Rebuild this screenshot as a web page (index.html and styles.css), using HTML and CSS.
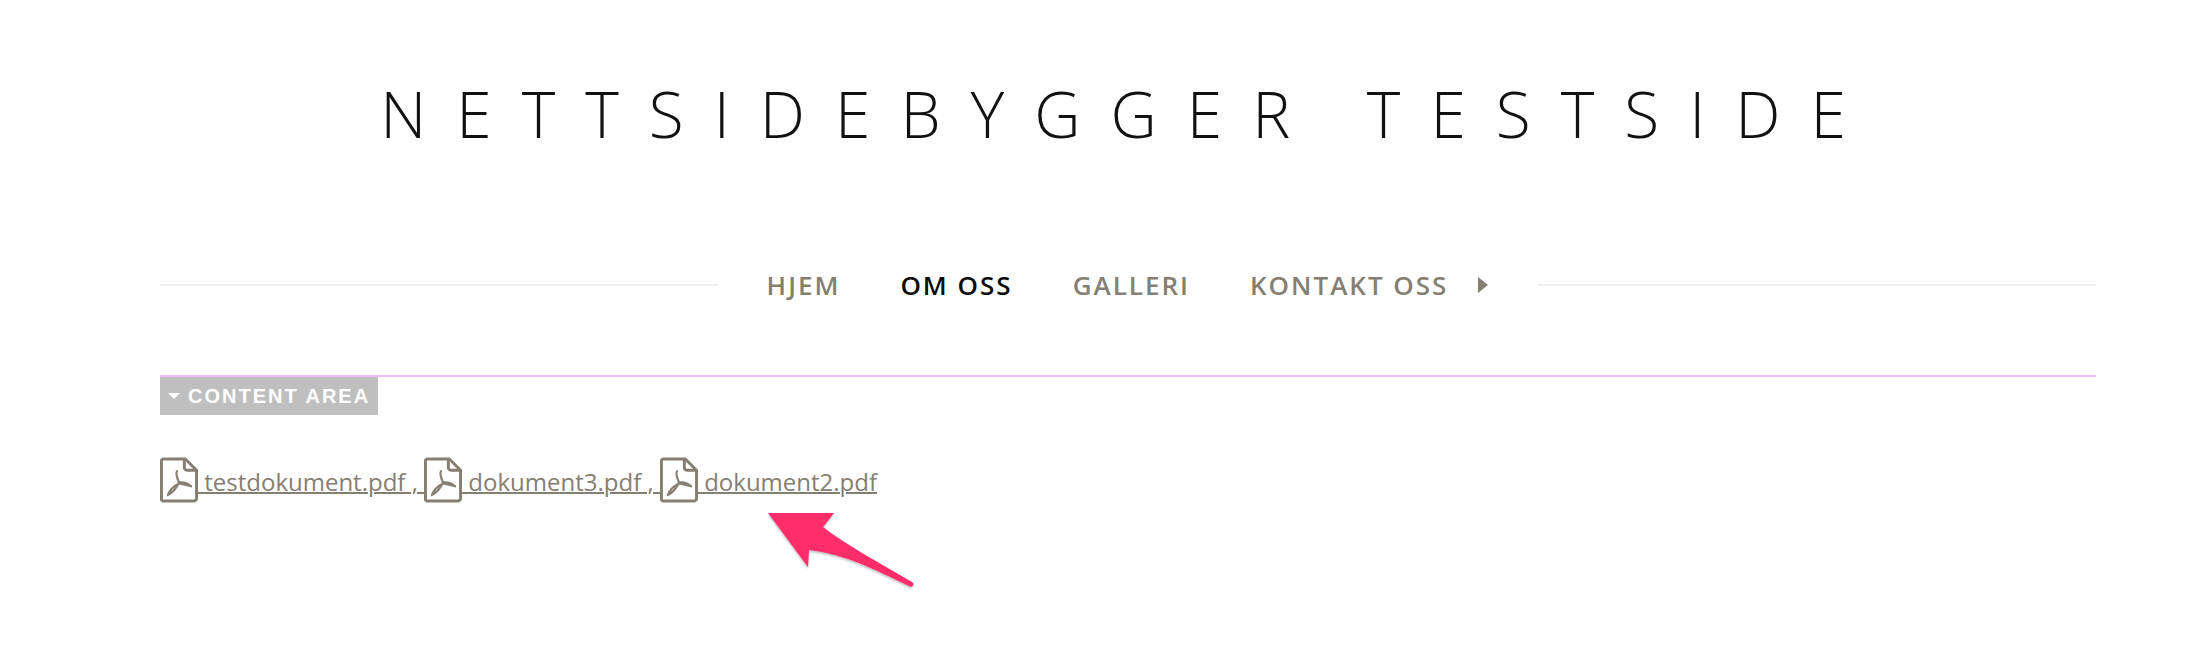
FILE: index.html
```html
<!DOCTYPE html>
<html lang="no">
<head>
<meta charset="utf-8">
<title>Nettsidebygger testside</title>
<link rel="stylesheet" href="styles.css">
</head>
<body>
<svg class="defs" width="0" height="0" aria-hidden="true">
  <symbol id="pdf" viewBox="0 0 39 46">
    <path d="M3.500 1.500H26L37.500 13V42a2.500 2.500 0 0 1-2.500 2.500H3.500a2 2 0 0 1-2-2.500V3.500a2 2 0 0 1 2-2Z" fill="none" stroke="#857e72" stroke-width="3" stroke-linejoin="round"/>
    <path d="M25 2V10.500a2.500 2.500 0 0 0 2.500 2.500H37" fill="none" stroke="#857e72" stroke-width="3"/>
    <path d="M17.500 14C16 16 17.500 21 19.500 25.500C17 31 12.500 36 8 38.500C10 33 14.500 29 19.500 26.500C23 27 27.500 28 32 29.500C27.500 25.500 23 25 19.500 25.500" fill="none" stroke="#857e72" stroke-width="2.200" stroke-linecap="round" stroke-linejoin="round"/>
  </symbol>
</svg>
<div class="page">
  <header class="site-title">NETTSIDEBYGGER TESTSIDE</header>
  <nav class="nav">
    <span class="nav-line"></span>
    <ul class="nav-list">
      <li class="nav-item">HJEM</li>
      <li class="nav-item nav-active">OM OSS</li>
      <li class="nav-item">GALLERI</li>
      <li class="nav-item nav-more">KONTAKT OSS<span class="nav-caret"></span></li>
    </ul>
    <span class="nav-line"></span>
  </nav>
  <section class="content">
    <div class="tag"><span class="tag-caret"></span>CONTENT AREA</div>
    <div class="files">
      <a class="file" href="#"><svg class="pdf-icon"><use href="#pdf"/></svg> testdokument.pdf , </a><a class="file" href="#"><svg class="pdf-icon"><use href="#pdf"/></svg> dokument3.pdf , </a><a class="file" href="#"><svg class="pdf-icon"><use href="#pdf"/></svg> dokument2.pdf</a>
      <svg class="arrow" viewBox="0 0 148 78" width="148" height="78" aria-hidden="true">
        <defs><filter id="sh" x="-10%" y="-10%" width="120%" height="130%"><feDropShadow dx="0" dy="1.500" stdDeviation="1" flood-color="#000" flood-opacity=".3"/></filter></defs>
        <path d="M0 0H66L55 14C78 32 112 50 144 69C147 71 145 75 141 73C105 56 80 42 41 37L40 54Z" fill="#ff2d6b" filter="url(#sh)"/>
      </svg>
    </div>
  </section>
</div>
</body>
</html>
```
FILE: styles.css
```css
html, body { margin: 0; padding: 0; background: #fff; }
body { height: 652px; overflow: hidden; font-family: "Open Sans", sans-serif; }
.defs { position: absolute; }
.page { padding: 0 90px 0 160px; }
.site-title {
  height: 232px;
  padding-top: 70px;
  box-sizing: border-box;
  text-align: center;
  font-weight: 300;
  font-size: 64px;
  line-height: 87px;
  letter-spacing: 30px;
  color: #111;
  white-space: nowrap;
}
.nav { display: flex; align-items: center; height: 106px; margin-bottom: 37px; }
.nav-line { flex: 1; height: 2px; background: #f0eeee; }
.nav-list { display: flex; gap: 60px; list-style: none; margin: 0; padding: 0 50px 0 49px; }
.nav-item { font-size: 26px; font-weight: 600; letter-spacing: 2px; line-height: 32px; color: #857e72; white-space: nowrap; }
.nav-active { color: #0b0b0b; }
.nav-more { display: flex; align-items: center; }
.nav-caret { margin-left: 30px; width: 0; height: 0; border-left: 10px solid #857e72; border-top: 8px solid transparent; border-bottom: 8px solid transparent; }
.content { border-top: 2px solid #f7b9f7; }
.tag {
  display: flex; align-items: center;
  width: 218px; height: 38px;
  background: #bfbfbf; color: #fff;
  font-family: "Liberation Sans", Arial, sans-serif;
  font-size: 20px; font-weight: 700; letter-spacing: 2px;
  box-sizing: border-box; padding-left: 8px;
  white-space: nowrap;
}
.tag-caret { width: 0; height: 0; margin-right: 8px; border-top: 6px solid #fff; border-left: 6px solid transparent; border-right: 6px solid transparent; }
.files { position: relative; margin-top: 42px; font-size: 24px; line-height: 46px; color: #857e72; white-space: nowrap; }
.file { color: #857e72; text-decoration: underline; text-decoration-thickness: 2px; }
.pdf-icon { width: 38px; height: 46px; vertical-align: -12px; }
.arrow { position: absolute; left: 608px; top: 56px; }
```
